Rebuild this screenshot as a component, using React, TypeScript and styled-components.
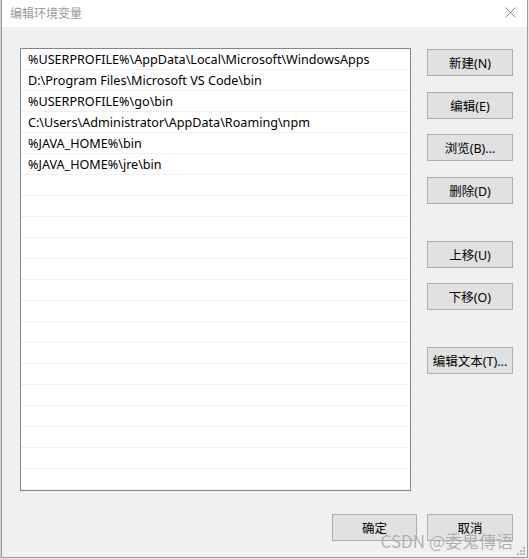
import React from 'react';
import styled, {createGlobalStyle} from 'styled-components';

const GlobalStyle = createGlobalStyle`
  html, body {
    margin: 0;
    padding: 0;
    background: #d9d9d9;
  }
  body {
    font-family: "Noto Sans", "Noto Sans CJK SC", sans-serif;
  }
`;

const Screen = styled.div`
  width: 529px;
  height: 559px;
  display: flex;
  overflow: hidden;
  background: #e6e6e6;
`;

const BackStrip = styled.div`
  width: 1px;
  background: #d0d0d0;
`;

const Dialog = styled.div`
  position: relative;
  width: 525px;
  height: 557px;
  display: flex;
  flex-direction: column;
  background: #f0f0f0;
  border: 1px solid #9b9b9b;
  border-top: none;
`;

const TitleBar = styled.div`
  height: 27px;
  flex-shrink: 0;
  display: flex;
  align-items: center;
  justify-content: space-between;
  padding: 0 11px 0 8px;
  background: #ffffff;
`;

const Title = styled.div`
  font-family: "Noto Sans CJK SC", sans-serif;
  font-size: 12px;
  color: #9a9a9a;
  margin-top: -2px;
`;

const CloseBtn = styled.div`
  width: 12px;
  height: 12px;
  display: flex;
  align-items: center;
  justify-content: center;
  margin-top: -3px;
`;

const Body = styled.div`
  flex: 1;
  display: flex;
  flex-direction: column;
  padding: 21px 14px 0 18px;
`;

const Main = styled.div`
  display: flex;
  gap: 16px;
`;

const ListBox = styled.div`
  width: 390px;
  height: 441px;
  overflow: hidden;
  background: #ffffff;
  border: 1px solid #828790;
`;

const Row = styled.div`
  box-sizing: border-box;
  height: 21px;
  padding-top: 1px;
  border-bottom: 1px solid #f0f0f0;
  display: flex;
  align-items: center;
  padding-left: 7px;
  font-size: 12.6px;
  color: #000000;
  white-space: nowrap;
`;

const ButtonCol = styled.div`
  display: flex;
  flex-direction: column;
  padding-top: 1px;
`;

const Btn = styled.div<{$top?: number; $width?: number}>`
  box-sizing: border-box;
  width: ${p => p.$width || 86}px;
  height: 27px;
  margin-top: ${p => p.$top || 0}px;
  display: flex;
  align-items: center;
  justify-content: center;
  background: #e1e1e1;
  border: 1px solid #adadad;
  font-family: "Noto Sans", "Noto Sans CJK SC", sans-serif;
  font-size: 12.5px;
  color: #000000;
`;

const Footer = styled.div`
  display: flex;
  justify-content: flex-end;
  gap: 10px;
  margin-top: 23px;
`;

const Watermark = styled.div`
  position: absolute;
  right: 14px;
  bottom: 4px;
  font-family: "Noto Sans CJK SC", sans-serif;
  font-size: 17px;
  color: rgba(110, 110, 110, 0.55);
  text-shadow: 0 0 1px rgba(255, 255, 255, 0.8);
  pointer-events: none;
`;

const Grip = styled.svg`
  position: absolute;
  right: 2px;
  bottom: 2px;
`;

const paths = [
  '%USERPROFILE%\\AppData\\Local\\Microsoft\\WindowsApps',
  'D:\\Program Files\\Microsoft VS Code\\bin',
  '%USERPROFILE%\\go\\bin',
  'C:\\Users\\Administrator\\AppData\\Roaming\\npm',
  '%JAVA_HOME%\\bin',
  '%JAVA_HOME%\\jre\\bin'
];

const sideButtons = [
  {label: '新建(N)', top: 0},
  {label: '编辑(E)', top: 16},
  {label: '浏览(B)...', top: 15},
  {label: '删除(D)', top: 16},
  {label: '上移(U)', top: 37},
  {label: '下移(O)', top: 15},
  {label: '编辑文本(T)...', top: 37}
];

export default function App() {
  const rows: string[] = [];
  for (let i = 0; i < 22; i++) {
    rows.push(paths[i] || '');
  }

  return (
    <>
      <GlobalStyle />
      <Screen>
        <BackStrip />
        <Dialog>
          <TitleBar>
            <Title>编辑环境变量</Title>
            <CloseBtn>
              <svg width="11" height="11" viewBox="0 0 11 11">
                <path d="M0.5 0.5 L10.5 10.5 M10.5 0.5 L0.5 10.5" stroke="#8a8a8a" strokeWidth="1" fill="none" />
              </svg>
            </CloseBtn>
          </TitleBar>
          <Body>
            <Main>
              <ListBox>
                {rows.map((r, i) => (
                  <Row key={i}>{r}</Row>
                ))}
              </ListBox>
              <ButtonCol>
                {sideButtons.map(b => (
                  <Btn key={b.label} $top={b.top}>
                    {b.label}
                  </Btn>
                ))}
              </ButtonCol>
            </Main>
            <Footer>
              <Btn $width={85}>确定</Btn>
              <Btn>取消</Btn>
            </Footer>
          </Body>
          <Watermark>CSDN @委鬼傳语</Watermark>
          <Grip width="8" height="8" viewBox="0 0 8 8">
            <rect x="6" y="0" width="2" height="2" fill="#b5b5b5" />
            <rect x="3" y="3" width="2" height="2" fill="#b5b5b5" />
            <rect x="6" y="3" width="2" height="2" fill="#b5b5b5" />
            <rect x="0" y="6" width="2" height="2" fill="#b5b5b5" />
            <rect x="3" y="6" width="2" height="2" fill="#b5b5b5" />
            <rect x="6" y="6" width="2" height="2" fill="#b5b5b5" />
          </Grip>
        </Dialog>
      </Screen>
    </>
  );
}
